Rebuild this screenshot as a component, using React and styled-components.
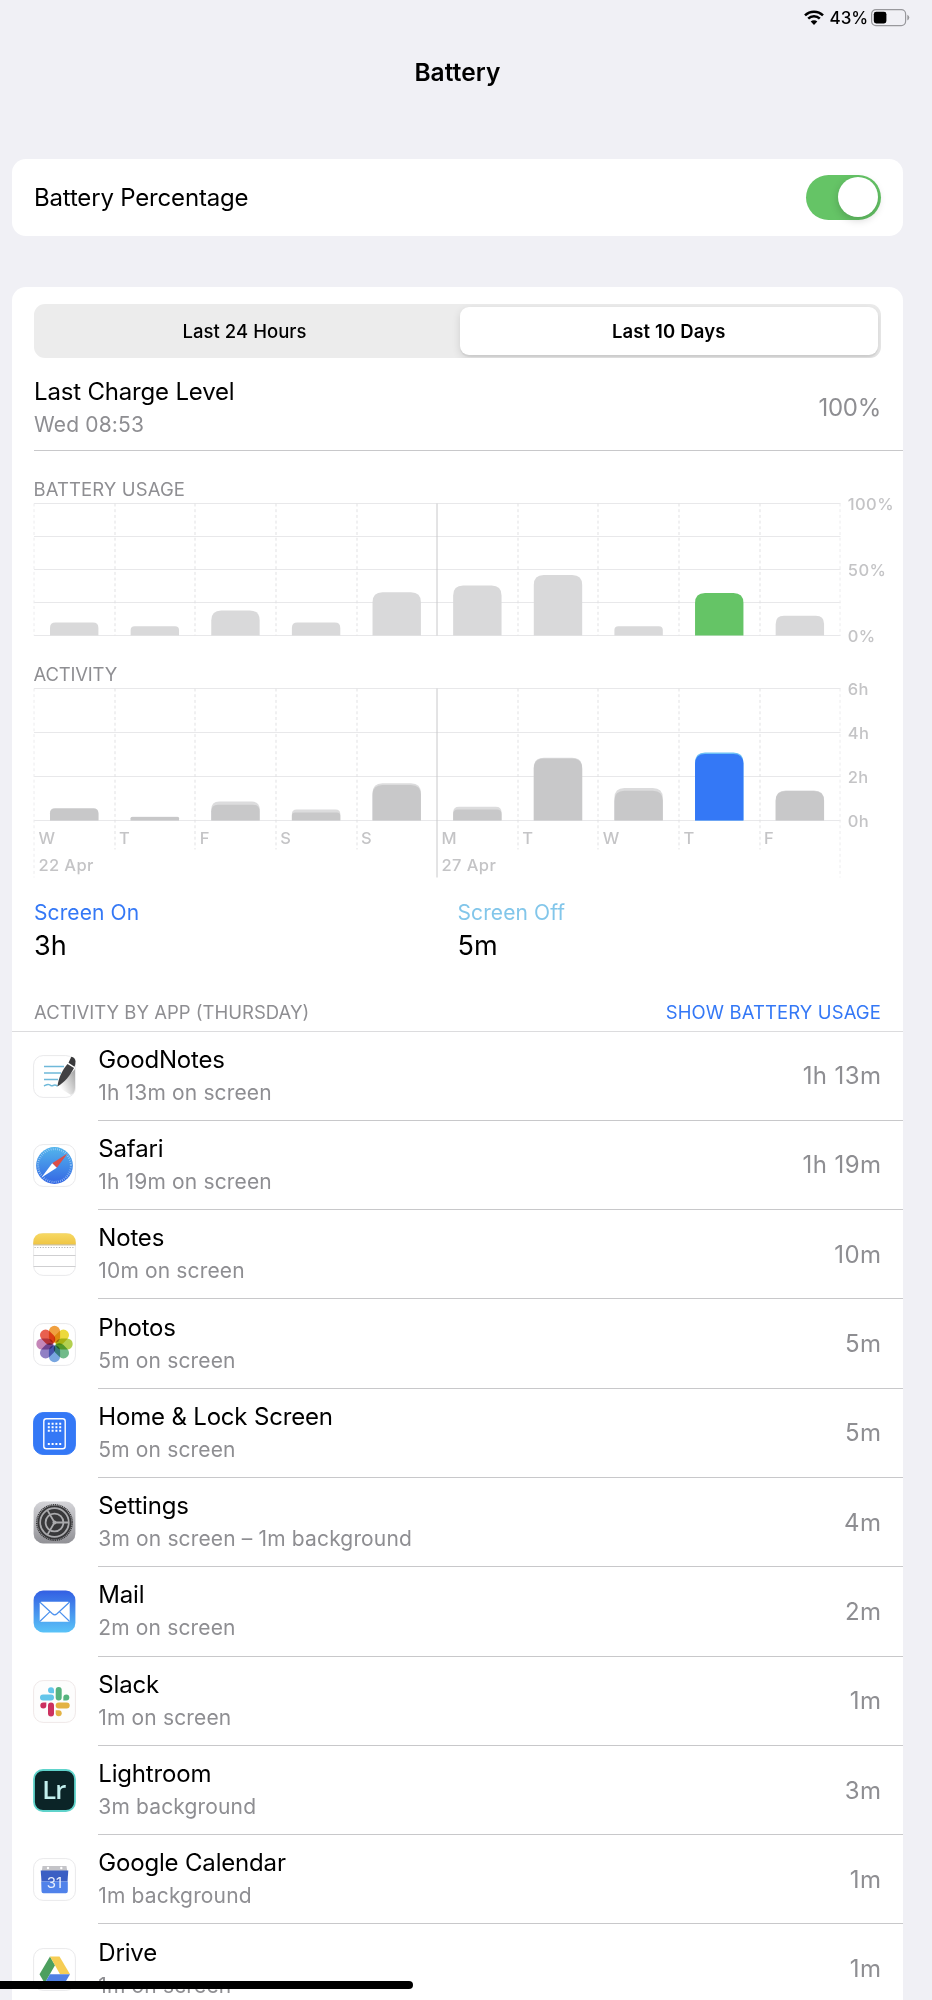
import React from 'react';
import styled, { createGlobalStyle } from 'styled-components';

const GREEN = '#65c466';
const BLUE = '#3478f6';
const LIGHT_BLUE = '#82c6ea';
const GREY = '#8e8e92';

const GlobalStyle = createGlobalStyle`
  * {
    box-sizing: border-box;
  }

  body {
    margin: 0;
    background: #f0f0f5;
    color: #000;
    font-family: Inter, 'Liberation Sans', sans-serif;
    -webkit-font-smoothing: antialiased;
  }
`;

const days = [
  { day: 'W', usage: 13, on: 12, total: 12.3 },
  { day: 'T', usage: 9.3, on: 3.5, total: 3.7 },
  { day: 'F', usage: 25, on: 15.8, total: 19 },
  { day: 'S', usage: 13, on: 8, total: 11 },
  { day: 'S', usage: 43.2, on: 35.4, total: 37.3 },
  { day: 'M', usage: 50, on: 11, total: 13.8 },
  { day: 'T', usage: 60.4, on: 62, total: 62.7 },
  { day: 'W', usage: 9.3, on: 29.8, total: 32.4 },
  { day: 'T', usage: 42.4, on: 66.4, total: 68, selected: true },
  { day: 'F', usage: 19.7, on: 29.6, total: 30 },
];

const COLUMN = 80.63;
const CHART_WIDTH = 806.5;
const CHART_HEIGHT = 132;

const barPath = (x, height) => {
  const r = Math.min(10, height * 0.42);
  const w = 48.4;
  return `M${x} ${CHART_HEIGHT}v${-(height - r)}q0 ${-r} ${r} ${-r}h${
    w - 2 * r
  }q${r} 0 ${r} ${r}v${height - r}z`;
};

const Chart = ({ lines, labels, tail = 0, children }) => (
  <ChartSvg height={CHART_HEIGHT + 6 + tail}>
    <g transform="translate(0 2.5)">
      {lines.map((y) => (
        <line key={y} x1="0" x2={CHART_WIDTH} y1={y} y2={y} stroke="#e8e8ea" />
      ))}
      {Array.from({ length: 11 }, (_, i) => {
        const edge = i === 0 || i === 10;
        const week = i === 5;
        const extra = edge || week ? tail : Math.min(tail, 29);
        return (
          <line
            key={i}
            x1={Math.round(i * COLUMN)}
            x2={Math.round(i * COLUMN)}
            y1="0"
            y2={CHART_HEIGHT + extra}
            stroke={week ? '#c8c8ca' : edge ? '#ececee' : '#e1e1e3'}
            strokeDasharray={week ? undefined : '3 2.7'}
          />
        );
      })}
      {children}
      {labels.map(([y, text]) => (
        <AxisText key={text} x="813.8" y={y + 6.2}>
          {text}
        </AxisText>
      ))}
    </g>
  </ChartSvg>
);

const UsageChart = () => (
  <Chart
    lines={[0, 33, 66, 99, 132]}
    labels={[
      [0, '100%'],
      [66, '50%'],
      [132, '0%'],
    ]}
  >
    {days.map((d, i) => (
      <path
        key={i}
        d={barPath(i * COLUMN + 16, d.usage)}
        fill={d.selected ? GREEN : '#d9d9da'}
      />
    ))}
  </Chart>
);

const ActivityChart = () => (
  <Chart
    tail={57}
    lines={[0, 44, 88, 132]}
    labels={[
      [0, '6h'],
      [44, '4h'],
      [88, '2h'],
      [132, '0h'],
    ]}
  >
    {days.map((d, i) => (
      <g key={i}>
        <path
          d={barPath(i * COLUMN + 16, d.total)}
          fill={d.selected ? '#6cc0f5' : '#dcdcdd'}
        />
        <path
          d={barPath(i * COLUMN + 16, d.on)}
          fill={d.selected ? BLUE : '#c8c8c9'}
        />
        <AxisText x={i * COLUMN + 4.4} y="155.5">
          {d.day}
        </AxisText>
      </g>
    ))}
    <AxisText x="4.4" y="182.5">
      22 Apr
    </AxisText>
    <AxisText x={5 * COLUMN + 4.4} y="182.5">
      27 Apr
    </AxisText>
  </Chart>
);

const Tile = ({ fill = '#fff', stroke = '#e9e9eb', children }) => (
  <svg width="43" height="43" viewBox="0 0 43 43">
    <rect x="0.6" y="0.6" width="41.8" height="41.8" rx="9.5" fill={fill} stroke={stroke} />
    {children}
  </svg>
);

const GoodNotesIcon = () => (
  <Tile>
    <defs>
      <linearGradient id="penShade" x1="0.2" y1="0.8" x2="1" y2="0.2">
        <stop offset="0" stopColor="#fff" />
        <stop offset="1" stopColor="#aaa" />
      </linearGradient>
    </defs>
    <path d="M25 32L42 14v19q0 5-4 7z" fill="url(#penShade)" />
    <path d="M11 11.5h20M11 18h17M11 24.5h14" stroke="#6fb9d9" strokeWidth="1.4" />
    <path
      d="M11 31c2-1 3-2 5-1.4s2 1.9 4 .9 3-.5 4.5.7"
      fill="none"
      stroke="#6fb9d9"
      strokeWidth="1.5"
    />
    <path d="M24.4 31.5C25.5 23 29 15.5 34.5 9l6.500 4C37 20.5 32 27 24.4 31.5z" fill="#414143" />
    <path d="M35.5 7.8l2.8-6c2.5.2 4.2 2.2 4.2 4.8 0 2-.3 3.700-1 5.200z" fill="#39393b" />
  </Tile>
);

const SafariIcon = () => (
  <Tile>
    <defs>
      <linearGradient id="safari" x1="0" y1="0" x2="0" y2="1">
        <stop offset="0" stopColor="#53b5ec" />
        <stop offset="1" stopColor="#3466e4" />
      </linearGradient>
    </defs>
    <circle cx="21.5" cy="21.5" r="18.4" fill="url(#safari)" />
    <circle
      cx="21.5"
      cy="21.5"
      r="16.4"
      fill="none"
      stroke="#b5d8f8"
      strokeWidth="2"
      strokeDasharray="0.6 1.546"
    />
    <path d="M34.5 9.5L19.2 19.2l4.6 4.6z" fill="#dc4e47" />
    <path d="M8.5 33.5l10.7-14.3 4.6 4.6z" fill="#fff" />
  </Tile>
);

const NotesIcon = () => (
  <Tile>
    <defs>
      <linearGradient id="notes" x1="0" y1="0" x2="0" y2="1">
        <stop offset="0" stopColor="#f7d964" />
        <stop offset="1" stopColor="#efc544" />
      </linearGradient>
    </defs>
    <path d="M.2 11.5V10Q.2.2 10 .2h23q9.8 0 9.8 9.8v1.5z" fill="url(#notes)" />
    <path d="M.5 11.9h42" stroke="#b9a878" strokeWidth="0.9" />
    <path d="M1.5 14.5h40" stroke="#b4b4b4" strokeDasharray="1.2 1.5" />
    <path d="M.5 22.5h42M.5 33.5h42" stroke="#cfcfd1" />
  </Tile>
);

const petals = [
  '#f0a040',
  '#ecd93c',
  '#b3d04f',
  '#71bb8a',
  '#78a6e0',
  '#9080c4',
  '#c586b8',
  '#e8604f',
];

const PhotosIcon = () => (
  <Tile>
    <Petals transform="translate(21.5 21)">
      {petals.map((color, i) => (
        <rect
          key={color}
          x="-5.6"
          y="-18.2"
          width="11.2"
          height="17"
          rx="5.6"
          fill={color}
          transform={`rotate(${i * 45})`}
        />
      ))}
    </Petals>
  </Tile>
);

const HomeIcon = () => (
  <Tile fill={BLUE} stroke={BLUE}>
    <rect x="10.8" y="6.7" width="21.4" height="30" rx="2.5" fill="none" stroke="#fff" strokeWidth="1.4" />
    {[11.7, 15.2, 18.7, 32].map((y) => (
      <path key={y} d={`M14.8 ${y}h14`} stroke="#fff" strokeWidth="2" strokeDasharray="2 1.8" />
    ))}
  </Tile>
);

const SettingsIcon = () => (
  <Tile fill="url(#settings)" stroke="none">
    <defs>
      <linearGradient id="settings" x1="0" y1="0" x2="0" y2="1">
        <stop offset="0" stopColor="#d4d4d8" />
        <stop offset="1" stopColor="#919196" />
      </linearGradient>
    </defs>
    <g fill="none" transform="translate(21.5 21.5)">
      <circle r="17" fill="#38383a" />
      <circle r="17.7" stroke="#38383a" strokeWidth="1.6" strokeDasharray="1.1 0.75" />
      <circle r="14.3" stroke="#aaaaad" strokeWidth="1.7" />
      <circle r="8.9" stroke="#aaaaad" strokeWidth="1.8" />
      <path d="M0 0H14M0 0L-7 -12.1M0 0L-7 12.1" stroke="#aaaaad" strokeWidth="1.8" />
      <circle r="2" fill="#aaaaad" />
    </g>
  </Tile>
);

const MailIcon = () => (
  <Tile fill="url(#mail)" stroke="none">
    <defs>
      <linearGradient id="mail" x1="0" y1="0" x2="0" y2="1">
        <stop offset="0" stopColor="#335fe3" />
        <stop offset="1" stopColor="#5ac3f8" />
      </linearGradient>
    </defs>
    <rect x="6.7" y="11.8" width="30" height="20" rx="1.5" fill="#fff" />
    <path
      d="M7 12.3l12.4 11.5q2.3 2 4.6 0L36.4 12.3M7 31.3l10-9.7M36.4 31.3l-10-9.7"
      fill="none"
      stroke="#4a90ee"
      strokeWidth="1.2"
    />
  </Tile>
);

const SlackIcon = () => (
  <Tile fill="#fdfdfd" stroke="#efe8e8">
    <g fill="#64c5ea">
      <rect x="7" y="14.5" width="14" height="6" rx="3" />
      <path d="M21 13.2h-3a3 3 0 1 1 3-3z" />
    </g>
    <g fill="#56b37f">
      <rect x="22.7" y="7" width="6" height="13.5" rx="3" />
      <path d="M30.3 20.5v-3a3 3 0 1 1 3 3z" />
    </g>
    <g fill="#e3b244">
      <rect x="22.7" y="22.5" width="14" height="6" rx="3" />
      <path d="M22.7 30.2h3a3 3 0 1 1-3 3z" />
    </g>
    <g fill="#cc3160">
      <rect x="15" y="22.5" width="6" height="14" rx="3" />
      <path d="M13.3 22.5v3a3 3 0 1 1-3-3z" />
    </g>
  </Tile>
);

const LightroomIcon = () => (
  <Tile fill="none" stroke="none">
    <rect x="1" y="1" width="41" height="41" rx="9" fill="#0b2427" stroke="#5fd3cb" strokeWidth="1.8" />
    <LrText x="9.3" y="30">
      Lr
    </LrText>
  </Tile>
);

const CalendarIcon = () => (
  <Tile>
    <path d="M9.5 8h24l.7 5H8.800z" fill="#c4c4c8" />
    <circle cx="15" cy="10" r="1.2" fill="#fff" />
    <circle cx="28.3" cy="10" r="1.2" fill="#fff" />
    <path d="M7.7 12.5h27.6l-.8 11H8.5z" fill="#3b5fc4" />
    <path d="M8.2 23.5h26.6v9.7q0 2-2 2H10.5q-2 0-2-2z" fill="#5082ea" />
    <CalendarText x="21.5" y="29.8">
      31
    </CalendarText>
  </Tile>
);

const DriveIcon = () => (
  <Tile>
    <path d="M17 8.5L6.5 26.2l5.2 9 10.3-18z" fill="#4c9f5e" />
    <path d="M17 8.5h9.5l10.5 17.7H27z" fill="#f6cd54" />
    <path d="M16.9 26.2H37l-5.3 9H11.7z" fill="#5080e4" />
  </Tile>
);

const apps = [
  { name: 'GoodNotes', detail: '1h 13m on screen', time: '1h 13m', Icon: GoodNotesIcon },
  { name: 'Safari', detail: '1h 19m on screen', time: '1h 19m', Icon: SafariIcon },
  { name: 'Notes', detail: '10m on screen', time: '10m', Icon: NotesIcon },
  { name: 'Photos', detail: '5m on screen', time: '5m', Icon: PhotosIcon },
  { name: 'Home & Lock Screen', detail: '5m on screen', time: '5m', Icon: HomeIcon },
  { name: 'Settings', detail: '3m on screen – 1m background', time: '4m', Icon: SettingsIcon },
  { name: 'Mail', detail: '2m on screen', time: '2m', Icon: MailIcon },
  { name: 'Slack', detail: '1m on screen', time: '1m', Icon: SlackIcon },
  { name: 'Lightroom', detail: '3m background', time: '3m', Icon: LightroomIcon },
  { name: 'Google Calendar', detail: '1m background', time: '1m', Icon: CalendarIcon },
  { name: 'Drive', detail: '1m on screen', time: '1m', Icon: DriveIcon },
];

const WifiIcon = () => (
  <svg width="20" height="15" viewBox="0 0 20 15">
    <g fill="none" stroke="#000" strokeWidth="2.5">
      <path d="M1 5.4a12.8 12.8 0 0 1 18 0" />
      <path d="M4.2 8.7a8.3 8.3 0 0 1 11.6 0" />
    </g>
    <path d="M10 14.9l3.3-3.3a4.7 4.7 0 0 0-6.6 0z" />
  </svg>
);

const BatteryIcon = () => (
  <svg width="39" height="18" viewBox="0 0 39 18">
    <rect x="0.6" y="0.6" width="34" height="16" rx="4.3" fill="none" stroke="#98989c" strokeWidth="1.2" />
    <rect x="2.8" y="2.8" width="12.6" height="11.6" rx="2.4" />
    <path d="M36.3 5.8q2 .9 2 2.8t-2 2.8z" fill="#98989c" />
  </svg>
);

const App = () => (
  <Page>
    <GlobalStyle />
    <StatusBar>
      <WifiIcon />
      <Percent>43%</Percent>
      <BatteryIcon />
    </StatusBar>
    <Title>Battery</Title>

    <ToggleCard>
      <Label>Battery Percentage</Label>
      <Toggle>
        <Knob />
      </Toggle>
    </ToggleCard>

    <StatsCard>
      <Segments>
        <Segment>Last 24 Hours</Segment>
        <ActiveSegment>Last 10 Days</ActiveSegment>
      </Segments>

      <ChargeRow>
        <div>
          <Label>Last Charge Level</Label>
          <Detail>Wed 08:53</Detail>
        </div>
        <Value>100%</Value>
      </ChargeRow>

      <Charts>
        <Caption $spacing="0.1px">BATTERY USAGE</Caption>
        <UsageChart />
        <ActivityCaption $spacing="-0.2px">ACTIVITY</ActivityCaption>
        <ActivityChart />
      </Charts>

      <Totals>
        <div>
          <TotalName $color={BLUE}>Screen On</TotalName>
          <TotalValue>3h</TotalValue>
        </div>
        <div>
          <TotalName $color={LIGHT_BLUE}>Screen Off</TotalName>
          <TotalValue>5m</TotalValue>
        </div>
      </Totals>

      <ListHeader>
        <Caption>ACTIVITY BY APP (THURSDAY)</Caption>
        <CaptionLink $spacing="0.1px">SHOW BATTERY USAGE</CaptionLink>
      </ListHeader>

      {apps.map(({ name, detail, time, Icon }) => (
        <AppRow key={name}>
          <Icon />
          <AppBody>
            <div>
              <Label>{name}</Label>
              <Detail>{detail}</Detail>
            </div>
            <AppTime>{time}</AppTime>
          </AppBody>
        </AppRow>
      ))}
    </StatsCard>
    <HomeBar />
  </Page>
);

const Page = styled.div`
  position: relative;
  height: 2000px;
  padding: 0 29px 0 12px;
  overflow: hidden;
  background: #f0f0f5;
`;

const StatusBar = styled.div`
  display: flex;
  align-items: center;
  justify-content: flex-end;
  height: 35px;
  margin-right: -7px;
`;

const Percent = styled.span`
  margin: 0 3px 0 6px;
  font-size: 17px;
  font-weight: 500;
  letter-spacing: -0.1px;
`;

const Title = styled.h1`
  margin: 20px 0 70px;
  font-size: 24.5px;
  font-weight: 600;
  line-height: 34px;
  letter-spacing: 0.1px;
  text-align: center;
`;

const Card = styled.section`
  background: #fff;
  border-radius: 14px;
`;

const ToggleCard = styled(Card)`
  display: flex;
  align-items: center;
  justify-content: space-between;
  height: 76.5px;
  margin-bottom: 51.5px;
  padding: 0 22px;
`;

const StatsCard = styled(Card)`
  padding-top: 17px;
`;

const Label = styled.div`
  font-size: 24px;
  line-height: 33px;
  letter-spacing: -0.18px;
`;

const Detail = styled.div`
  color: ${GREY};
  font-size: 21px;
  line-height: 33px;
  letter-spacing: 0.15px;
`;

const Value = styled.div`
  color: ${GREY};
  font-size: 24px;
  letter-spacing: -0.25px;
`;

const AppTime = styled(Value)`
  margin-right: -0.4px;
  letter-spacing: 0.4px;
`;

const Toggle = styled.div`
  display: flex;
  justify-content: flex-end;
  width: 75px;
  height: 45px;
  padding: 2.5px 3.2px;
  background: ${GREEN};
  border-radius: 23px;
`;

const Knob = styled.div`
  width: 40px;
  height: 40px;
  background: #fff;
  border-radius: 50%;
  box-shadow: 0 3px 9px rgba(0, 0, 0, 0.18);
`;

const Segments = styled.div`
  display: flex;
  width: 847.5px;
  height: 54px;
  margin-left: 21.5px;
  padding: 3px;
  overflow: hidden;
  background: #ececec;
  border-radius: 11px;
`;

const Segment = styled.div`
  flex: 1;
  padding-right: 7px;
  font-size: 18.5px;
  font-weight: 500;
  line-height: 48px;
  letter-spacing: 0.05px;
  text-align: center;
`;

const ActiveSegment = styled(Segment)`
  flex: 0 0 418.5px;
  padding-right: 0;
  background: #fff;
  border-radius: 9px;
  box-shadow: 0 3px 8px rgba(0, 0, 0, 0.12), 0 2px 1px rgba(0, 0, 0, 0.05);
  font-weight: 600;
  letter-spacing: 0.15px;
`;

const ChargeRow = styled.div`
  display: flex;
  justify-content: space-between;
  height: 92.5px;
  margin-left: 21.5px;
  padding: 17px 22px 0 0.5px;
  border-bottom: 1px solid #c8c8ca;

  ${Value} {
    line-height: 65px;
  }
`;

const Charts = styled.div`
  padding: 26.5px 0 0 21.5px;
`;

const Caption = styled.div`
  color: ${GREY};
  font-size: 18.5px;
  line-height: 24px;
  letter-spacing: ${(props) => props.$spacing || '0'};
`;

const ActivityCaption = styled(Caption)`
  margin-top: 23px;
`;

const CaptionLink = styled(Caption)`
  color: ${BLUE};
`;

const ChartSvg = styled.svg`
  display: block;
  width: 100%;
  overflow: visible;
`;

const AxisText = styled.text`
  fill: #c4c4c6;
  font-size: 16.5px;
  font-weight: 500;
  letter-spacing: 0.4px;
`;

const Totals = styled.div`
  display: grid;
  grid-template-columns: 423.5px 1fr;
  height: 99.5px;
  padding: 15px 0 0 22px;
`;

const TotalName = styled.div`
  color: ${(props) => props.$color};
  font-size: 21px;
  line-height: 33px;
  letter-spacing: 0.1px;
`;

const TotalValue = styled.div`
  font-size: 27px;
  line-height: 33px;
`;

const ListHeader = styled.div`
  display: flex;
  justify-content: space-between;
  height: 51px;
  padding: 19px 22px 0;
  border-bottom: 1px solid #dcdcde;
`;

const AppRow = styled.div`
  display: flex;
  align-items: center;
  height: 89.3px;
  padding-left: 21.3px;
`;

const AppBody = styled.div`
  display: flex;
  flex: 1;
  align-items: center;
  justify-content: space-between;
  height: 100%;
  margin-left: 22px;
  padding-right: 22px;
  border-bottom: 1px solid #c8c8ca;
`;

const Petals = styled.g`
  isolation: isolate;

  rect {
    mix-blend-mode: multiply;
  }
`;

const LrText = styled.text`
  fill: #c2f0ee;
  font-family: 'Open Sans', sans-serif;
  font-size: 25.5px;
  font-weight: 600;
  letter-spacing: -1px;
`;

const CalendarText = styled.text`
  fill: #e8effc;
  font-size: 15px;
  text-anchor: middle;
`;

const HomeBar = styled.div`
  position: absolute;
  bottom: 11px;
  left: 0;
  width: 413px;
  height: 8px;
  background: #000;
  border-radius: 0 4px 4px 0;
`;

export default App;
